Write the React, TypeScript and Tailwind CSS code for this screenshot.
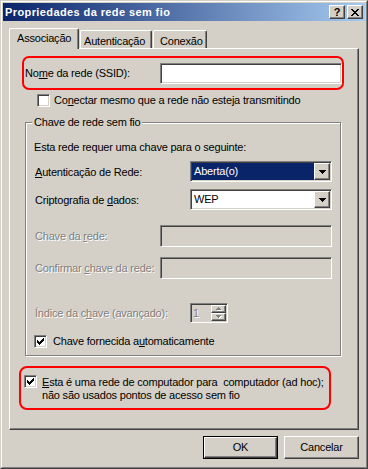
import React from "react";

const SUNKEN =
  "border border-t-[#808080] border-l-[#808080] border-r-white border-b-white shadow-[inset_1px_1px_0_#404040,inset_-1px_-1px_0_#d4d0c8]";
const RAISED =
  "border border-t-white border-l-white border-r-[#404040] border-b-[#404040] shadow-[inset_-1px_-1px_0_#808080]";
const DIS = "text-[#808080] [text-shadow:1px_1px_0_#fff]";

function CheckMark() {
  return (
    <svg width="7" height="7" viewBox="0 0 7 7" shapeRendering="crispEdges">
      <rect x="6" y="0" width="1" height="1" fill="#000" />
      <rect x="5" y="1" width="2" height="1" fill="#000" />
      <rect x="0" y="2" width="1" height="1" fill="#000" />
      <rect x="4" y="2" width="3" height="1" fill="#000" />
      <rect x="0" y="3" width="2" height="1" fill="#000" />
      <rect x="3" y="3" width="3" height="1" fill="#000" />
      <rect x="0" y="4" width="5" height="1" fill="#000" />
      <rect x="1" y="5" width="3" height="1" fill="#000" />
      <rect x="2" y="6" width="1" height="1" fill="#000" />
    </svg>
  );
}

function Check({ checked }: { checked?: boolean }) {
  return (
    <div
      className={`w-[13px] h-[13px] shrink-0 bg-white flex items-center justify-center ${SUNKEN}`}
    >
      {checked && <CheckMark />}
    </div>
  );
}

function DownArrow() {
  return (
    <svg width="7" height="4" viewBox="0 0 7 4" shapeRendering="crispEdges">
      <rect x="0" y="0" width="7" height="1" fill="#000" />
      <rect x="1" y="1" width="5" height="1" fill="#000" />
      <rect x="2" y="2" width="3" height="1" fill="#000" />
      <rect x="3" y="3" width="1" height="1" fill="#000" />
    </svg>
  );
}

function Combo({ value, selected }: { value: string; selected?: boolean }) {
  return (
    <div className={`w-[142px] h-[21px] bg-white p-px flex ${SUNKEN}`}>
      <div
        className={`flex-1 pl-[2px] leading-[17px] ${
          selected ? "bg-[#0a246a] text-white" : "text-black"
        }`}
      >
        {value}
      </div>
      <div
        className={`w-[16px] h-[17px] bg-[#d4d0c8] flex items-center justify-center ${RAISED}`}
      >
        <DownArrow />
      </div>
    </div>
  );
}

function SpinArrow({ up }: { up?: boolean }) {
  const rows = up
    ? [
        [2, 0, 1],
        [1, 1, 3],
        [0, 2, 5],
      ]
    : [
        [0, 0, 5],
        [1, 1, 3],
        [2, 2, 1],
      ];
  return (
    <svg width="6" height="4" viewBox="0 0 6 4" shapeRendering="crispEdges">
      {rows.map(([x, y, w], i) => (
        <rect key={"w" + i} x={x + 1} y={y + 1} width={w} height="1" fill="#fff" />
      ))}
      {rows.map(([x, y, w], i) => (
        <rect key={"g" + i} x={x} y={y} width={w} height="1" fill="#808080" />
      ))}
    </svg>
  );
}

function Spin() {
  return (
    <div className={`w-[38px] h-[20px] bg-[#d4d0c8] p-px flex ${SUNKEN}`}>
      <div className={`flex-1 pl-px leading-[16px] ${DIS}`}>1</div>
      <div className="w-[15px] flex flex-col">
        <div className={`h-[8px] bg-[#d4d0c8] flex items-center justify-center ${RAISED}`}>
          <SpinArrow up />
        </div>
        <div className={`h-[8px] bg-[#d4d0c8] flex items-center justify-center ${RAISED}`}>
          <SpinArrow />
        </div>
      </div>
    </div>
  );
}

function CloseGlyph() {
  const rows = [
    [0, 2, 6, 2],
    [1, 2, 5, 2],
    [2, 4],
    [3, 2],
    [2, 4],
    [1, 2, 5, 2],
    [0, 2, 6, 2],
  ];
  return (
    <svg width="8" height="7" viewBox="0 0 8 7" shapeRendering="crispEdges">
      {rows.map((r, y) => {
        const out = [];
        for (let i = 0; i < r.length; i += 2) {
          out.push(
            <rect key={y + "-" + i} x={r[i]} y={y} width={r[i + 1]} height="1" fill="#000" />
          );
        }
        return out;
      })}
    </svg>
  );
}

export default function App() {
  return (
    <div
      className={`w-[368px] h-[469px] bg-[#d4d0c8] border border-t-[#d4d0c8] border-l-[#d4d0c8] border-r-[#404040] border-b-[#404040] font-['Liberation_Sans',Arial,sans-serif] text-[11px] leading-[13px] tracking-[-0.2px] text-black`}
    >
      <div className="h-full border border-t-white border-l-white border-r-[#808080] border-b-[#808080] p-px flex flex-col">
        {/* Title bar */}
        <div className="h-[18px] bg-[linear-gradient(to_right,#0a246a,#a6caf0)] flex items-center pl-[2px] pr-[2px]">
          <span className="flex-1 font-bold text-white tracking-[0.4px]">
            Propriedades da rede sem fio
          </span>
          <div
            className={`w-[16px] h-[14px] bg-[#d4d0c8] flex items-center justify-center font-bold text-[11px] leading-[12px] tracking-normal ${RAISED}`}
          >
            ?
          </div>
          <div
            className={`ml-[2px] w-[16px] h-[14px] bg-[#d4d0c8] flex items-center justify-center ${RAISED}`}
          >
            <CloseGlyph />
          </div>
        </div>

        <div className="px-[6px] flex flex-col">
          {/* Tabs */}
          <div className="mt-[7px] h-[21px] flex items-end">
            <div className="relative z-10 w-[70px] h-[21px] bg-[#d4d0c8] border-t border-l border-r border-t-white border-l-white border-r-[#404040] shadow-[inset_-1px_0_0_#808080] rounded-tl-[2px] rounded-tr-[2px] pl-[7px] pt-[3px]">
              Associação
            </div>
            <div className="ml-px w-[72px] h-[19px] border-t border-l border-r border-t-white border-l-white border-r-[#404040] shadow-[inset_-1px_0_0_#808080] rounded-tl-[2px] rounded-tr-[2px] pl-[3px] pt-[4px]">
              Autenticação
            </div>
            <div className="ml-px w-[54px] h-[19px] border-t border-l border-r border-t-white border-l-white border-r-[#404040] shadow-[inset_-1px_0_0_#808080] rounded-tl-[2px] rounded-tr-[2px] pl-[6px] pt-[4px]">
              Conexão
            </div>
          </div>

          {/* Panel */}
          <div className="-mt-px w-[350px] h-[382px] border border-t-white border-l-white border-r-[#404040] border-b-[#404040] shadow-[inset_-1px_-1px_0_#808080] flex flex-col">
            {/* SSID */}
            <div className="ml-[12px] mt-[7px] w-[322px] h-[34px] border-2 border-[#ff0000] rounded-[7px] flex items-center justify-between pl-px pt-[5px] pb-[4px]">
              <span>
                No<u>m</u>e da rede (SSID):
              </span>
              <div className={`w-[182px] h-[21px] bg-white ${SUNKEN}`} />
            </div>

            <div className="ml-[27px] mt-[4px] h-[13px] flex items-center gap-[4px]">
              <Check />
              <span>
                Co<u>n</u>ectar mesmo que a rede não esteja transmitindo
              </span>
            </div>

            {/* Group box */}
            <div className="relative ml-[15px] mt-[15px] w-[316px] h-[234px] border border-[#808080] shadow-[1px_1px_0_#fff,inset_1px_1px_0_#fff] flex flex-col">
              <span className="absolute left-[6px] -top-[7px] px-[2px] bg-[#d4d0c8]">
                Chave de rede sem fio
              </span>
              <div className="ml-[8px] mt-[18px]">Esta rede requer uma chave para o seguinte:</div>

              <div className="ml-[9px] mt-[7px] flex items-center">
                <span className="w-[155px] pt-[2px]">
                  <u>A</u>utenticação de Rede:
                </span>
                <Combo value="Aberta(o)" selected />
              </div>
              <div className="ml-[9px] mt-[7px] flex items-center">
                <span className="w-[155px] pt-[2px]">
                  Criptografia de <u>d</u>ados:
                </span>
                <Combo value="WEP" />
              </div>

              <div className="ml-[9px] mt-[15px] flex items-center">
                <span className={`w-[125px] ${DIS}`}>
                  Chave da <u>r</u>ede:
                </span>
                <div className={`w-[172px] h-[22px] bg-[#d4d0c8] ${SUNKEN}`} />
              </div>
              <div className="ml-[9px] mt-[10px] flex items-center">
                <span className={`w-[125px] ${DIS}`}>
                  Confirmar <u>c</u>have da rede:
                </span>
                <div className={`w-[172px] h-[22px] bg-[#d4d0c8] ${SUNKEN}`} />
              </div>

              <div className="ml-[9px] mt-[24px] flex items-center">
                <span className={`w-[155px] ${DIS}`}>
                  Índice da c<u>h</u>ave (avançado):
                </span>
                <Spin />
              </div>

              <div className="ml-[8px] mt-[12px] h-[13px] flex items-center gap-[6px]">
                <Check checked />
                <span>
                  Chave fornecida a<u>u</u>tomaticamente
                </span>
              </div>
            </div>

            {/* Ad hoc */}
            <div className="ml-[9px] mt-[10px] w-[312px] h-[44px] border-2 border-[#ff0000] rounded-[8px] flex items-start pl-[3px] pt-[7px] gap-[5px]">
              <Check checked />
              <div className="mt-px whitespace-pre">
                <div>
                  <u>E</u>sta é uma rede de computador para  computador (ad hoc);
                </div>
                <div>não são usados pontos de acesso sem fio</div>
              </div>
            </div>
          </div>

          {/* Buttons */}
          <div className="mt-[6px] flex justify-end gap-[6px]">
            <div className="w-[75px] h-[23px] border border-black">
              <div className={`w-full h-full flex items-center justify-center ${RAISED}`}>OK</div>
            </div>
            <div className={`w-[75px] h-[23px] flex items-center justify-center ${RAISED}`}>
              Cancelar
            </div>
          </div>
        </div>
      </div>
    </div>
  );
}
